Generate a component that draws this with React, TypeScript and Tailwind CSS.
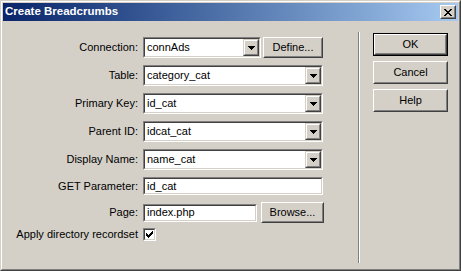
const FACE = "bg-[#d4d0c8]";

function Pixels({ rows, className }: { rows: string[]; className?: string }) {
  const w = rows[0].length;
  const h = rows.length;
  return (
    <svg width={w} height={h} viewBox={`0 0 ${w} ${h}`} className={className} shapeRendering="crispEdges">
      {rows.flatMap((r, y) =>
        r.split("").map((c, x) => (c === "X" ? <rect key={`${x}-${y}`} x={x} y={y} width={1} height={1} fill="#000" /> : null))
      )}
    </svg>
  );
}

const closeGlyph = ["XX....XX", ".XX..XX.", "..XXXX..", "...XX...", "..XXXX..", ".XX..XX.", "XX....XX"];
const checkGlyph = ["......X", ".....XX", "X...XXX", "XX.XXX.", "XXXXX..", ".XXX...", "..X...."];
const arrowGlyph = ["XXXXXXX", ".XXXXX.", "..XXX..", "...X..."];

// raised 3d frame, classic windows look
function Raised({ className, children }: { className?: string; children?: React.ReactNode }) {
  return (
    <div className={`border border-t-white border-l-white border-r-[#404040] border-b-[#404040] ${className ?? ""}`}>
      <div className={`w-full h-full border border-t-[#d4d0c8] border-l-[#d4d0c8] border-r-[#808080] border-b-[#808080] ${FACE} flex items-center justify-center`}>
        {children}
      </div>
    </div>
  );
}

function Sunken({ className, children }: { className?: string; children?: React.ReactNode }) {
  return (
    <div className={`border border-t-[#808080] border-l-[#808080] border-r-white border-b-white ${className ?? ""}`}>
      <div className="w-full h-full border border-t-[#404040] border-l-[#404040] border-r-[#d4d0c8] border-b-[#d4d0c8] bg-white flex items-center">
        {children}
      </div>
    </div>
  );
}

function Select({ value, width }: { value: string; width: string }) {
  return (
    <Sunken className={`${width} h-[21px]`}>
      <span className="flex-1 pl-[2px] leading-[15px] whitespace-nowrap overflow-hidden">{value}</span>
      <div className="border border-t-[#d4d0c8] border-l-[#d4d0c8] border-r-[#404040] border-b-[#404040] w-[16px] h-[17px]">
        <div className={`w-full h-full border border-t-white border-l-white border-r-[#808080] border-b-[#808080] ${FACE} flex items-center justify-center`}>
          <Pixels rows={arrowGlyph} />
        </div>
      </div>
    </Sunken>
  );
}

function Label({ text }: { text: string }) {
  return <div className="w-[135px] text-right whitespace-nowrap">{text}</div>;
}

function Row({ label, h, mb, children }: { label: string; h: string; mb: string; children: React.ReactNode }) {
  return (
    <div className={`flex items-center ${h} ${mb}`}>
      <Label text={label} />
      <div className="ml-[5px] flex items-center">{children}</div>
    </div>
  );
}

const selects = [
  ["Table:", "category_cat"],
  ["Primary Key:", "id_cat"],
  ["Parent ID:", "idcat_cat"],
  ["Display Name:", "name_cat"],
];

function Button({ text, def }: { text: string; def?: boolean }) {
  if (def)
    return (
      <div className="border border-black w-[75px] h-[23px]">
        <Raised className="w-full h-full">{text}</Raised>
      </div>
    );
  return <Raised className="w-[75px] h-[23px]">{text}</Raised>;
}

export default function App() {
  return (
    <div className="w-[461px] h-[271px] font-['Liberation_Sans',Arial,sans-serif] text-[11px] text-black border border-t-[#d4d0c8] border-l-[#d4d0c8] border-r-[#404040] border-b-[#404040]">
      <div className={`w-full h-full border border-t-white border-l-white border-r-[#808080] border-b-[#808080] ${FACE} p-px flex flex-col`}>
        <div className="h-[18px] bg-linear-to-r from-[#0a246a] to-[#a6caf0] flex items-center">
          <span className="pl-[2px] text-white font-bold text-[11.5px] flex-1">Create Breadcrumbs</span>
          <Raised className="w-[16px] h-[14px] mr-[2px]">
            <Pixels rows={closeGlyph} />
          </Raised>
        </div>
        <div className="flex">
          <div className="w-[322px] pt-[16px]">
            <Row label="Connection:" h="h-[21px]" mb="mb-[7px]">
              <Select value="connAds" width="w-[118px]" />
              <Raised className="ml-[2px] -mt-px w-[60px] h-[21px]">Define...</Raised>
            </Row>
            {selects.map(([l, v]) => (
              <Row key={l} label={l} h="h-[21px]" mb="mb-[7px]">
                <Select value={v} width="w-[180px]" />
              </Row>
            ))}
            <Row label="GET Parameter:" h="h-[18px]" mb="mb-[7px]">
              <Sunken className="w-[180px] h-[18px]">
                <span className="pl-[2px]">id_cat</span>
              </Sunken>
            </Row>
            <Row label="Page:" h="h-[21px]" mb="mb-[5px]">
              <Sunken className="w-[114px] h-[18px]">
                <span className="pl-[2px]">index.php</span>
              </Sunken>
              <Raised className="ml-[4px] w-[63px] h-[21px]">Browse...</Raised>
            </Row>
            <Row label="Apply directory recordset" h="h-[13px]" mb="mb-0">
              <Sunken className="w-[13px] h-[13px]">
                <div className="w-full flex items-center justify-center">
                  <Pixels rows={checkGlyph} />
                </div>
              </Sunken>
            </Row>
          </div>
          <div className="ml-[33px] mt-[11px] w-[2px] h-[231px] border-l border-l-[#808080] border-r border-r-white" />
          <div className="ml-[13px] mt-[12px] flex flex-col gap-[5px]">
            <Button text="OK" def />
            <Button text="Cancel" />
            <Button text="Help" />
          </div>
        </div>
      </div>
    </div>
  );
}
